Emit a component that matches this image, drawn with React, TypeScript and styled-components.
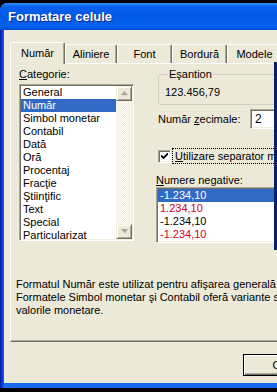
import styled, { createGlobalStyle } from "styled-components";

const GlobalStyle = createGlobalStyle`
  html, body {
    margin: 0;
    padding: 0;
    background: #000;
  }
  body {
    font-family: "Liberation Sans", Arial, sans-serif;
    font-size: 11px;
    color: #000;
  }
`;

const Screen = styled.div`
  position: relative;
  width: 277px;
  height: 392px;
  overflow: hidden;
  background: #000;
  padding-top: 3px;
  box-sizing: border-box;
`;
const Window = styled.div`
  display: flex;
  flex-direction: column;
  width: 290px;
  height: 385px;
  background: #0831d9;
  border-top-left-radius: 7px;
  overflow: hidden;
`;
const TitleBar = styled.div`
  flex: 0 0 27px;
  display: flex;
  align-items: center;
  padding-left: 8px;
  background: linear-gradient(#3d95ff 0%, #0a63ef 12%, #0058e6 45%, #0561ef 85%, #0050d8 100%);
  color: #fff;
  font-weight: bold;
  font-size: 13px;
  text-shadow: 1px 1px #0a2a8c;
`;
const Frame = styled.div`
  flex: 1;
  display: flex;
  padding: 0 0 5px 4px;
  background: linear-gradient(90deg, #001c96 0px, #0831d9 2px, #166aee 4px);
`;
const Content = styled.div`
  flex: 1;
  display: flex;
  flex-direction: column;
  background: #ece9d8;
  overflow: hidden;
`;
const Tabs = styled.div`
  display: flex;
  align-items: flex-end;
  padding: 11px 0 0 6px;
  height: 22px;
`;
const Tab = styled.div<{ $w: number; $active?: boolean }>`
  position: relative;
  z-index: ${(p) => (p.$active ? 1 : 0)};
  flex: 0 0 ${(p) => p.$w}px;
  box-sizing: border-box;
  height: ${(p) => (p.$active ? 22 : 19)}px;
  margin-bottom: ${(p) => (p.$active ? -1 : 0)}px;
  display: flex;
  align-items: center;
  justify-content: center;
  padding-bottom: ${(p) => (p.$active ? 2 : 0)}px;
  background: #ece9d8;
  border-top: 1px solid #fff;
  border-left: 1px solid #fff;
  border-right: 1px solid #716f64;
  box-shadow: inset -1px 0 #aca899;
  border-radius: 2px 2px 0 0;
`;
const Panel = styled.div`
  margin-left: 6px;
  width: 400px;
  height: 279px;
  box-sizing: border-box;
  border-top: 1px solid #fff;
  border-left: 1px solid #fff;
  border-bottom: 1px solid #716f64;
  box-shadow: inset 0 -1px #aca899;
  padding: 4px 0 0 5px;
  display: flex;
  flex-direction: column;
`;
const TopRow = styled.div`
  display: flex;
`;
const LeftCol = styled.div`
  width: 115px;
  margin-left: 3px;
  display: flex;
  flex-direction: column;
`;
const RightCol = styled.div`
  margin-left: 22px;
  width: 250px;
  display: flex;
  flex-direction: column;
`;
const Label = styled.div<{ $mb?: number }>`
  line-height: 13px;
  height: 13px;
  white-space: nowrap;
  margin-bottom: ${(p) => p.$mb ?? 0}px;
  u {
    text-decoration: underline;
  }
`;
const ListBox = styled.div<{ $h: number }>`
  height: ${(p) => p.$h}px;
  box-sizing: border-box;
  background: #fff;
  border: 1px solid;
  border-color: #aca899 #fff #fff #aca899;
  box-shadow: inset 1px 1px #716f64, inset -1px -1px #f1efe2;
  padding: 1px;
  display: flex;
  overflow: hidden;
`;
const Items = styled.div`
  flex: 1;
  display: flex;
  flex-direction: column;
`;
const Item = styled.div<{ $selected?: boolean; $red?: boolean }>`
  height: 13px;
  line-height: 13px;
  padding-left: 2px;
  white-space: nowrap;
  background: ${(p) => (p.$selected ? "#316ac5" : "transparent")};
  color: ${(p) => (p.$selected ? "#fff" : p.$red ? "#d00020" : "#000")};
`;
const ScrollBar = styled.div`
  flex: 0 0 16px;
  display: flex;
  flex-direction: column;
  justify-content: space-between;
  background-color: #f4f3ee;
  background-image: repeating-conic-gradient(#ece9d8 0 25%, #fff 0 50%);
  background-size: 2px 2px;
`;
const ScrollButton = styled.div`
  height: 15px;
  box-sizing: border-box;
  background: #ece9d8;
  border: 1px solid;
  border-color: #f1efe2 #716f64 #716f64 #f1efe2;
  box-shadow: inset 1px 1px #fff, inset -1px -1px #aca899;
  display: flex;
  align-items: center;
  justify-content: center;
`;
const GroupBox = styled.fieldset`
  margin: 0 0 0 2px;
  padding: 5px 6px 6px;
  border: 1px solid #d0d0bf;
  border-radius: 3px;
  line-height: 12px;
`;
const Legend = styled.legend`
  padding: 0 1px;
  margin-left: 3px;
  line-height: 13px;
`;
const FieldRow = styled.div`
  display: flex;
  align-items: center;
  margin: 4px 0 0 2px;
  height: 20px;
`;
const FieldLabel = styled.div`
  width: 92px;
  u {
    text-decoration: underline;
  }
`;
const Input = styled.div`
  width: 50px;
  height: 20px;
  box-sizing: border-box;
  background: #fff;
  border: 1px solid;
  border-color: #aca899 #fff #fff #aca899;
  box-shadow: inset 1px 1px #716f64, inset -1px -1px #f1efe2;
  padding-left: 4px;
  line-height: 18px;
  font-size: 12px;
`;
const CheckRow = styled.div`
  display: flex;
  align-items: center;
  margin: 19px 0 0 2px;
  height: 16px;
`;
const CheckBox = styled.div`
  width: 13px;
  height: 13px;
  box-sizing: border-box;
  background: #fff;
  border: 1px solid;
  border-color: #aca899 #fff #fff #aca899;
  box-shadow: inset 1px 1px #716f64, inset -1px -1px #f1efe2;
  display: flex;
  align-items: center;
  justify-content: center;
`;
const CheckLabel = styled.div`
  margin-left: 1px;
  padding: 1px 2px;
  border: 1px dotted #000;
  white-space: nowrap;
  line-height: 12px;
  u {
    text-decoration: underline;
  }
`;
const Description = styled.div`
  margin-top: 35px;
  line-height: 13px;
  white-space: nowrap;
`;
const Footer = styled.div`
  display: flex;
  padding: 12px 0 0 239px;
  gap: 6px;
`;
const Button = styled.div<{ $default?: boolean }>`
  flex: 0 0 75px;
  height: 22px;
  box-sizing: border-box;
  border: 1px solid #000;
  box-shadow: inset 1px 1px #fff, inset -1px -1px #716f64, inset -2px -2px #aca899;
  display: flex;
  align-items: center;
  justify-content: center;
`;
const EdgeStrip = styled.div`
  position: absolute;
  right: 0;
  top: 62px;
  width: 3px;
  height: 188px;
  background: #0a1f6a;
`;

function Arrow({ down }: { down?: boolean }) {
  return (
    <svg width="7" height="5" viewBox="0 0 7 5">
      <path
        d={down ? "M1 1h5l-2.5 3z" : "M1 4h5L3.5 1z"}
        fill="#aca899"
        transform="translate(0.5 0.5)"
        opacity="0.5"
      />
      <path d={down ? "M0 0h7L3.5 4z" : "M0 4h7L3.5 0z"} fill="#aca899" />
    </svg>
  );
}

const categories = [
  "General",
  "Număr",
  "Simbol monetar",
  "Contabil",
  "Dată",
  "Oră",
  "Procentaj",
  "Fracţie",
  "Ştiinţific",
  "Text",
  "Special",
  "Particularizat",
];

const negatives = [
  { text: "-1.234,10", red: false },
  { text: "1.234,10", red: true },
  { text: "-1.234,10", red: false },
  { text: "-1.234,10", red: true },
];

export default function App() {
  return (
    <Screen>
      <GlobalStyle />
      <Window>
        <TitleBar>Formatare celule</TitleBar>
        <Frame>
          <Content>
            <Tabs>
              <Tab $w={55} $active>
                Număr
              </Tab>
              <Tab $w={52}>Aliniere</Tab>
              <Tab $w={55}>Font</Tab>
              <Tab $w={55}>Bordură</Tab>
              <Tab $w={55}>Modele</Tab>
            </Tabs>
            <Panel>
              <TopRow>
                <LeftCol>
                  <Label $mb={3}>
                    <u>C</u>ategorie:
                  </Label>
                  <ListBox $h={157}>
                    <Items>
                      {categories.map((c, i) => (
                        <Item key={c} $selected={i === 1}>
                          {c}
                        </Item>
                      ))}
                    </Items>
                    <ScrollBar>
                      <ScrollButton>
                        <Arrow />
                      </ScrollButton>
                      <ScrollButton>
                        <Arrow down />
                      </ScrollButton>
                    </ScrollBar>
                  </ListBox>
                </LeftCol>
                <RightCol>
                  <GroupBox>
                    <Legend>Eşantion</Legend>
                    123.456,79
                  </GroupBox>
                  <FieldRow>
                    <FieldLabel>
                      Număr <u>z</u>ecimale:
                    </FieldLabel>
                    <Input>2</Input>
                  </FieldRow>
                  <CheckRow>
                    <CheckBox>
                      <svg width="7" height="7" viewBox="0 0 7 7">
                        <path d="M0 2.5l2.5 2.5L7 0.5" stroke="#000" strokeWidth="1.8" fill="none" />
                      </svg>
                    </CheckBox>
                    <CheckLabel>
                      <u>U</u>tilizare separator mii (.)
                    </CheckLabel>
                  </CheckRow>
                  <Label style={{ marginTop: 10 }}>
                    <u>N</u>umere negative:
                  </Label>
                  <ListBox $h={56}>
                    <Items>
                      {negatives.map((n, i) => (
                        <Item key={i} $selected={i === 0} $red={n.red}>
                          {n.text}
                        </Item>
                      ))}
                    </Items>
                  </ListBox>
                </RightCol>
              </TopRow>
              <Description>
                Formatul Număr este utilizat pentru afişarea generală a numerelor.
                <br />
                Formatele Simbol monetar şi Contabil oferă variante specializate pentru
                <br />
                valorile monetare.
              </Description>
            </Panel>
            <Footer>
              <Button $default>OK</Button>
              <Button>Revocare</Button>
            </Footer>
          </Content>
        </Frame>
      </Window>
      <EdgeStrip />
    </Screen>
  );
}
